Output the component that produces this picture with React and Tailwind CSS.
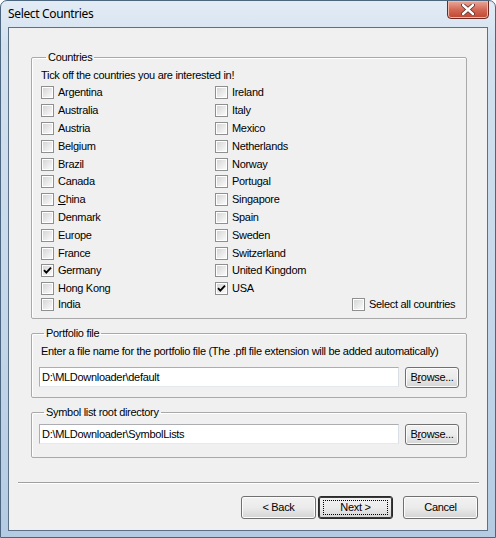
import React from "react";

const leftCountries = [
    "Argentina",
    "Australia",
    "Austria",
    "Belgium",
    "Brazil",
    "Canada",
    "China",
    "Denmark",
    "Europe",
    "France",
    "Germany",
    "Hong Kong",
];

const rightCountries = [
    "Ireland",
    "Italy",
    "Mexico",
    "Netherlands",
    "Norway",
    "Portugal",
    "Singapore",
    "Spain",
    "Sweden",
    "Switzerland",
    "United Kingdom",
    "USA",
];

const checkedCountries = ["Germany", "USA"];

function CheckBox({ checked }) {
    return (
        <span className="flex h-[13px] w-[13px] shrink-0 items-center justify-center border border-[#8e8f8f] bg-[#f4f4f4]">
            <span className="relative flex h-[11px] w-[11px] items-center justify-center border border-white bg-linear-to-br from-[#d6d6d6] to-[#fafafa]">
                {checked && (
                    <svg
                        width="9"
                        height="9"
                        viewBox="0 0 9 9"
                        className="absolute"
                    >
                        <polyline
                            points="1,4.2 3.3,6.6 8,1.6"
                            fill="none"
                            stroke="#000"
                            strokeWidth="1.9"
                        />
                    </svg>
                )}
            </span>
        </span>
    );
}

function Label({ name }) {
    if (name === "China") {
        return (
            <span>
                <span className="underline">C</span>hina
            </span>
        );
    }
    return <span>{name}</span>;
}

function CountryItem({ name }) {
    return (
        <div className="flex h-[17.8px] items-center gap-[4px]">
            <CheckBox checked={checkedCountries.includes(name)} />
            <Label name={name} />
        </div>
    );
}

function Button({ children, isDefault, className = "" }) {
    return (
        <button
            className={`flex h-[23px] w-[75px] items-center justify-center rounded-[3px] border bg-linear-to-b from-[#f2f2f2] via-[#ebebeb] to-[#d4d4d4] text-black ${
                isDefault
                    ? "border-[#2a2a2a] shadow-[inset_0_0_0_1px_#3a3a3a]"
                    : "border-[#707070] shadow-[inset_0_0_0_1px_#fcfcfc]"
            } ${className}`}
        >
            {isDefault ? (
                <span className="flex h-[15px] w-[65px] items-center justify-center border border-dotted border-black">
                    {children}
                </span>
            ) : (
                children
            )}
        </button>
    );
}

function BrowseButton() {
    return (
        <button className="flex h-[21px] w-[54px] items-center justify-center rounded-[3px] border border-[#707070] bg-linear-to-b from-[#f2f2f2] via-[#ebebeb] to-[#d4d4d4] shadow-[inset_0_0_0_1px_#fcfcfc]">
            B<span className="underline">r</span>owse...
        </button>
    );
}

function PathInput({ value }) {
    return (
        <div className="flex h-[20px] w-[360px] items-center border border-[#abadb3] border-b-[#e3e9ef] border-r-[#dbdfe6] bg-white pl-[2px]">
            {value}
        </div>
    );
}

export default function App() {
    return (
        <div
            className="relative flex h-[538px] w-[496px] flex-col overflow-hidden whitespace-nowrap rounded-t-[7px] border border-[#4d6680] bg-[linear-gradient(180deg,#e3ecf5_0%,#d3e1ef_8%,#c4d7ea_60%,#b4cbe2_100%)] text-[11px] leading-[13px] tracking-[-0.3px] text-black"
            style={{ fontFamily: '"Liberation Sans", Arial, sans-serif' }}
        >
            <div className="flex h-[26px] shrink-0 items-start">
                <div
                    className="pl-[7px] pt-[5px] text-[12px] leading-[16px] tracking-[-0.35px] text-black"
                    style={{ fontFamily: '"Noto Sans", "Liberation Sans", sans-serif' }}
                >
                    Select Countries
                </div>
                <div className="ml-auto mr-[6px] mt-[-1px] flex h-[19px] w-[42px] items-center justify-center rounded-b-[4px] border border-[#6e2a22] bg-linear-to-b from-[#e9a899] via-[#d36a57] to-[#c0442f] shadow-[inset_0_0_0_1px_#f1b9ab]">
                    <svg width="14" height="11" viewBox="0 0 14 11">
                        <path
                            d="M2 1 L12 10 M12 1 L2 10"
                            stroke="#5a2620"
                            strokeWidth="4"
                            strokeLinecap="round"
                        />
                        <path
                            d="M2 1 L12 10 M12 1 L2 10"
                            stroke="#fff"
                            strokeWidth="2.4"
                            strokeLinecap="round"
                        />
                    </svg>
                </div>
            </div>

            <div className="ml-[7px] flex h-[504px] w-[480px] flex-col border border-[#5d7186] bg-[#f0f0f0]">
                <fieldset className="ml-[22px] mt-[23px] w-[436px] rounded-[2px] border border-[#a9a9a9] pb-[7px] pl-[9px] shadow-[inset_1px_1px_0_#fff]">
                    <legend className="ml-[5px] px-[2px] leading-[13px]">
                        Countries
                    </legend>
                    <div className="pt-[2px]">
                        <div className="flex h-[18px] items-center">
                            Tick off the countries you are interested in!
                        </div>
                        <div className="grid grid-cols-[174px_1fr]">
                            {leftCountries.map((name, i) => (
                                <React.Fragment key={name}>
                                    <CountryItem name={name} />
                                    <CountryItem name={rightCountries[i]} />
                                </React.Fragment>
                            ))}
                            <div className="flex h-[13px] items-center gap-[4px]">
                                <CheckBox />
                                <span>India</span>
                            </div>
                            <div className="ml-[137px] flex h-[13px] items-center gap-[4px]">
                                <CheckBox />
                                <span>Select all countries</span>
                            </div>
                        </div>
                    </div>
                </fieldset>

                <fieldset className="ml-[22px] mt-[8px] w-[436px] rounded-[2px] border border-[#a9a9a9] pb-[9px] pl-[7px] shadow-[inset_1px_1px_0_#fff]">
                    <legend className="ml-[5px] px-[2px] leading-[13px]">
                        Portfolio file
                    </legend>
                    <div className="ml-[2px] flex h-[20px] items-center pt-[4px]">
                        Enter a file name for the portfolio file (The .pfl file
                        extension will be added automatically)
                    </div>
                    <div className="mt-[7px] flex h-[21px] items-center gap-[6px]">
                        <PathInput value="D:\MLDownloader\default" />
                        <BrowseButton />
                    </div>
                </fieldset>

                <fieldset className="ml-[22px] mt-[8px] w-[436px] rounded-[2px] border border-[#a9a9a9] pb-[12px] pl-[7px] shadow-[inset_1px_1px_0_#fff]">
                    <legend className="ml-[5px] px-[2px] leading-[13px]">
                        Symbol list root directory
                    </legend>
                    <div className="mt-[5px] flex h-[21px] items-center gap-[6px]">
                        <PathInput value="D:\MLDownloader\SymbolLists" />
                        <BrowseButton />
                    </div>
                </fieldset>

                <div className="ml-[9px] mt-[24px] h-[2px] w-[461px] border-t border-b border-t-[#a0a0a0] border-b-white" />

                <div className="mt-[12px] flex justify-end pr-[9px]">
                    <Button>&lt; Back</Button>
                    <Button isDefault className="ml-[2px]">
                        Next &gt;
                    </Button>
                    <Button className="ml-[10px]">Cancel</Button>
                </div>
            </div>
        </div>
    );
}
